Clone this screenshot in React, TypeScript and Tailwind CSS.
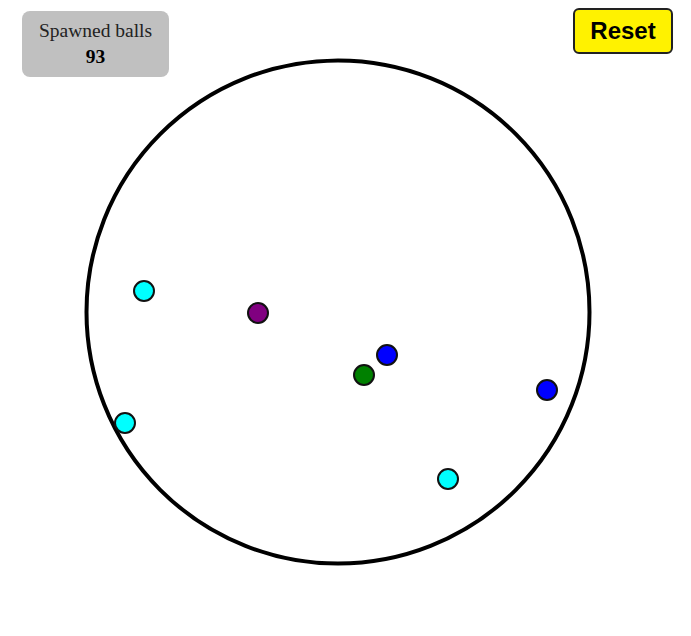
const balls = [
  { x: 144, y: 291, color: "#00ffff" },
  { x: 258, y: 313, color: "#800080" },
  { x: 387, y: 355, color: "#0000ff" },
  { x: 364, y: 375, color: "#008000" },
  { x: 547, y: 390, color: "#0000ff" },
  { x: 125, y: 423, color: "#00ffff" },
  { x: 448, y: 479, color: "#00ffff" },
]

export default function App() {
  return (
    <div className="relative w-full h-[636px] bg-white overflow-hidden">
      {/* arena */}
      <svg width="691" height="636" className="block">
        <circle cx="338" cy="312" r="251.5" fill="none" stroke="#000" strokeWidth="4" />
        {balls.map((b, i) => (
          <circle key={i} cx={b.x} cy={b.y} r="10" fill={b.color} stroke="#111" strokeWidth="2" />
        ))}
      </svg>

      {/* counter */}
      <div
        className="absolute left-[22px] top-[11px] w-[147px] h-[66px] rounded-lg bg-[#c0c0c0] flex flex-col items-center justify-center text-[19.5px] leading-[26px] text-[#222]"
        style={{ fontFamily: "'Liberation Serif', 'Times New Roman', serif" }}
      >
        <div>Spawned balls</div>
        <div className="font-bold text-black">93</div>
      </div>

      {/* reset */}
      <button
        className="absolute left-[573px] top-[8px] w-[100px] h-[46px] rounded-md border-2 border-[#222] bg-[#fff200] text-[24px] font-bold text-black"
        style={{ fontFamily: "'Liberation Sans', Arial, sans-serif" }}
      >
        Reset
      </button>
    </div>
  )
}
